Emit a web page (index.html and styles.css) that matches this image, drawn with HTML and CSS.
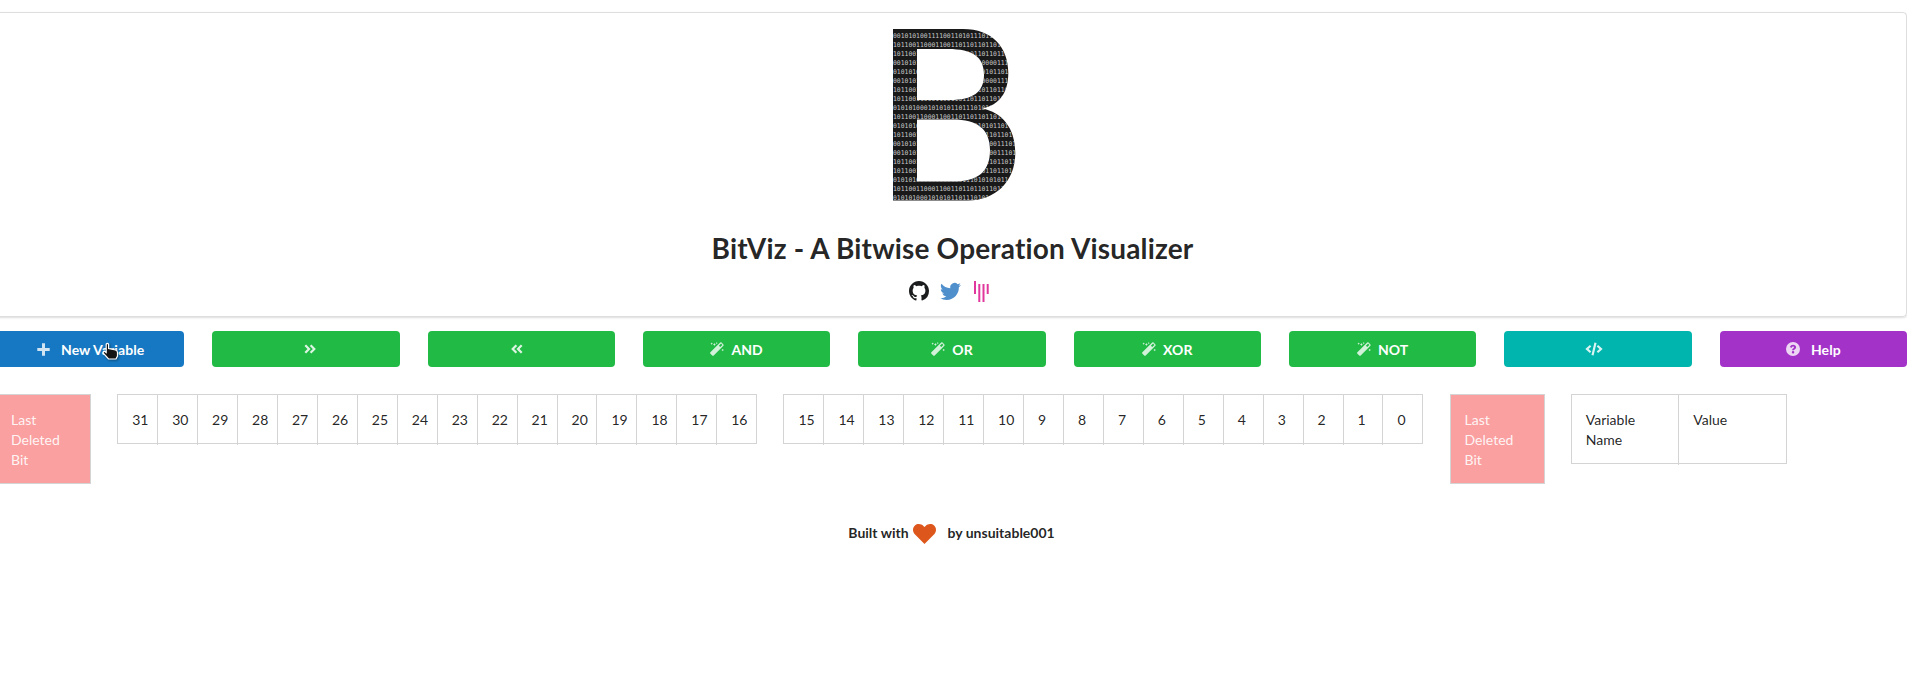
FILE: index.html
```
<!DOCTYPE html>
<html lang="en">
<head>
<meta charset="utf-8">
<title>BitViz - A Bitwise Operation Visualizer</title>
<link rel="stylesheet" href="styles.css">
</head>
<body>
<svg class="defs" width="0" height="0">
  <symbol id="wand" viewBox="0 0 14 14">
    <path fill-rule="evenodd" d="M.4 10.3 10.2.6Q10.9 0 11.6.6L13.4 2.400Q14 3.100 13.400 3.800L3.700 13.600Q3 14.200 2.300 13.600L.4 11.700Q-.2 11 .4 10.300ZM8.900 3.800 10.200 5.100 12.400 2.900 11.100 1.600Z"/>
    <path d="M1.700.4l.4.9.9.4-.9.400-.4.900-.4-.9L.4 1.700l.9-.4ZM4.400 1l.5 1 1 .5-1 .5-.5 1-.5-1-1-.5 1-.5ZM6.700 0l.3.800.8.300-.8.300-.3.800-.3-.8-.8-.3.800-.3ZM12.700 6.700l.4.900.9.400-.9.400-.4.900-.4-.9-.9-.4.900-.4Z"/>
  </symbol>
</svg>
<div class="page">
  <header class="segment">
    <svg class="logo" width="124" height="172" viewBox="0 0 124 172" role="img" aria-label="B">
      <clipPath id="letter"><path clip-rule="evenodd" d="M0 0H70C99 0 115.300 18 115.300 44C115.300 63 107 76 89 79.500C109 83 122.300 99 122.300 124C122.300 153 102 171.500 75 171.500H0ZM24 20V71H57C80 71 91 63 91 46C91 28 80 20 55 20ZM24 90.500V152.500H60C86 152.500 97 142 97 121C97 100 84 90.500 60 90.500Z"/></clipPath>
      <g clip-path="url(#letter)">
        <rect width="124" height="172" fill="#191919"/>
        <g class="bits">
          <text x="0" y="9.3">001010100111100110101110110110110</text>
          <text x="0" y="18.3">101100110001100110110110110110110</text>
          <text x="0" y="27.2">101100110001100110110110110110110</text>
          <text x="0" y="36.2">001010100111100110101110000111010</text>
          <text x="0" y="45.1">010101000101010110111010101101010</text>
          <text x="0" y="54.1">001010100111100110101110000111010</text>
          <text x="0" y="63">101100110001100110110110110110110</text>
          <text x="0" y="72">101100110001100110110110110110110</text>
          <text x="0" y="81">010101000101010110111010101101010</text>
          <text x="0" y="89.9">101100110001100110110110110110110</text>
          <text x="0" y="98.900">010101000101010110111010101101010</text>
          <text x="0" y="107.800">101100110001100110110110110110110</text>
          <text x="0" y="116.800">001010100111100110101110000111010</text>
          <text x="0" y="125.700">001010100111100110101110000111010</text>
          <text x="0" y="134.700">101100110001100110110110110110110</text>
          <text x="0" y="143.700">101100110001100110110110110110110</text>
          <text x="0" y="152.600">010101000101010110111010101011010</text>
          <text x="0" y="161.600">101100110001100110110110110110110</text>
          <text x="0" y="170.500">010101000101010110111010101101010</text>
        </g>
      </g>
    </svg>
    <h1 class="title">BitViz - A Bitwise Operation Visualizer</h1>
    <div class="social">
      <svg width="20" height="20" viewBox="0 0 16 16" fill="#1b1c1d"><path d="M8 0C3.580 0 0 3.580 0 8c0 3.540 2.290 6.530 5.470 7.590.4.070.55-.17.55-.38 0-.19-.01-.82-.01-1.490-2.010.37-2.530-.49-2.690-.94-.09-.23-.48-.94-.82-1.130-.28-.15-.68-.52-.01-.53.63-.01 1.080.58 1.230.82.72 1.210 1.870.87 2.330.66.07-.52.28-.87.51-1.070-1.780-.2-3.640-.89-3.640-3.950 0-.87.31-1.590.82-2.150-.08-.2-.36-1.020.08-2.120 0 0 .67-.21 2.200.82.64-.18 1.320-.27 2-.27s1.360.09 2 .27c1.530-1.040 2.200-.82 2.200-.82.44 1.100.16 1.920.08 2.120.51.56.82 1.270.82 2.150 0 3.070-1.870 3.750-3.650 3.950.29.25.54.73.54 1.480 0 1.070-.01 1.930-.01 2.200 0 .21.15.46.55.38A8.010 8.010 0 0 0 16 8c0-4.420-3.580-8-8-8z"/></svg>
      <svg width="21" height="21" viewBox="0 0 24 24" fill="#4f8fcc"><path d="M23.950 4.570a10 10 0 0 1-2.820.77 4.960 4.960 0 0 0 2.160-2.720c-.95.55-2 .95-3.130 1.180a4.920 4.920 0 0 0-8.380 4.480C7.690 8.090 4.070 6.130 1.640 3.160a4.820 4.820 0 0 0-.67 2.480c0 1.710.87 3.210 2.190 4.100a4.900 4.900 0 0 1-2.230-.62v.06a4.920 4.920 0 0 0 3.950 4.830 5 5 0 0 1-2.210.08 4.940 4.940 0 0 0 4.600 3.420A9.870 9.870 0 0 1 0 19.540a13.990 13.990 0 0 0 7.550 2.210c9.050 0 14-7.500 14-13.980 0-.21 0-.42-.02-.63a9.940 9.940 0 0 0 2.460-2.550z"/></svg>
      <svg class="gitter" width="15" height="21" viewBox="0 0 15 21" fill="#e0389d"><path d="M0 0h2v13H0zM4.300 3h2v18h-2zM8.500 3h2v18h-2zM12.700 3h2v10h-2z"/></svg>
    </div>
  </header>

  <nav class="toolbar">
    <button class="btn blue"><svg class="plus" width="13" height="13" viewBox="0 0 13 13"><path d="M5 .3h3V5h4.700v3H8v4.700H5V8H.3V5H5Z"/></svg>New Variable
      <svg class="pointer" width="19" height="21" viewBox="0 0 19 21"><path d="M4.200 2.200Q5.400.6 6.600 2.200V6.500L13.500 8Q15.500 8.600 15.500 10.500V14L14 17H6.500L1.300 11.200Q.8 9.500 2.400 9.200L4.200 10.500Z"/></svg>
    </button>
    <button class="btn green"><svg class="angle right" width="12" height="10" viewBox="0 0 12 10"><path d="M1.300 1.200 5 5 1.300 8.800M6.600 1.200 10.300 5 6.600 8.800"/></svg></button>
    <button class="btn green"><svg class="angle left" width="12" height="10" viewBox="0 0 12 10"><path d="M5.400 1.200 1.700 5 5.400 8.800M10.700 1.200 7 5 10.700 8.800"/></svg></button>
    <button class="btn green"><svg class="wand" width="14" height="14"><use href="#wand"/></svg>AND</button>
    <button class="btn green"><svg class="wand" width="14" height="14"><use href="#wand"/></svg>OR</button>
    <button class="btn green"><svg class="wand" width="14" height="14"><use href="#wand"/></svg>XOR</button>
    <button class="btn green"><svg class="wand" width="14" height="14"><use href="#wand"/></svg>NOT</button>
    <button class="btn teal"><svg class="code left" width="18" height="14" viewBox="0 0 18 14"><path d="M5.600 3.800 2 7 5.600 10.200M12.400 3.800 16 7 12.400 10.200M10.500.8 7.500 13.200"/></svg></button>
    <button class="btn purple"><svg class="help" width="14" height="14" viewBox="0 0 14 14"><path fill-rule="evenodd" d="M7 0a7 7 0 1 0 0 14A7 7 0 0 0 7 0ZM4 5C4.600 3.500 5.600 2.700 7.100 2.700C8.800 2.700 10.100 3.800 10.100 5.300C10.100 7.200 8 7.300 8 8.300H6.100C6.100 6.400 8.100 6.300 8.100 5.300C8.100 4.100 6.200 4.200 5.400 6ZM7.050 9a1.250 1.250 0 1 1 0 2.500a1.250 1.250 0 0 1 0-2.500Z"/></svg>Help</button>
  </nav>

  <main class="tables">
    <div class="deleted">Last Deleted Bit</div>
    <div class="bitgrid"><span>31</span><span>30</span><span>29</span><span>28</span><span>27</span><span>26</span><span>25</span><span>24</span><span>23</span><span>22</span><span>21</span><span>20</span><span>19</span><span>18</span><span>17</span><span>16</span></div>
    <div class="bitgrid"><span>15</span><span>14</span><span>13</span><span>12</span><span>11</span><span>10</span><span>9</span><span>8</span><span>7</span><span>6</span><span>5</span><span>4</span><span>3</span><span>2</span><span>1</span><span>0</span></div>
    <div class="deleted">Last Deleted Bit</div>
    <div class="variables"><span>Variable Name</span><span>Value</span></div>
  </main>

  <footer class="footer">Built with<svg width="23" height="20" viewBox="0 0 23 20"><path fill="#dd571c" d="M11.500 20 1.800 10.300C-.7 7.600-.5 3.600 1.900 1.500C4.500-.7 8.200-.2 10.400 2L11.500 3.100L12.600 2C14.800-.2 18.500-.7 21.100 1.500C23.500 3.600 23.700 7.600 21.200 10.300Z"/></svg>by unsuitable001</footer>
</div>
</body>
</html>
```
FILE: styles.css
```
* { box-sizing: border-box; }
body {
  margin: 0;
  overflow: hidden;
  background: #fff;
  color: rgba(0, 0, 0, .87);
  font: 14px/20px Lato, "Liberation Sans", sans-serif;
  font-variant-ligatures: none;
}
.defs { display: block; }
.page {
  width: 1911px;
  margin-left: -4px;
  padding-top: 12px;
}
.segment {
  display: flex;
  flex-direction: column;
  align-items: center;
  height: 305px;
  padding-top: 16px;
  border: 1px solid rgba(34, 36, 38, .15);
  border-radius: 4px;
  box-shadow: 0 1px 2px 0 rgba(34, 36, 38, .15);
}
.logo { margin-left: 6px; }
.bits {
  fill: #c8c8c8;
  font: 6.4px "DejaVu Sans Mono", monospace;
}
.title {
  margin: 29px 0 0 2px;
  font-size: 28px;
  line-height: 36px;
  font-weight: 700;
  letter-spacing: .16px;
}
.social {
  display: flex;
  gap: 11px;
  margin: 15px 5px 0 0;
}
.gitter { margin-left: 2px; }
.toolbar {
  display: grid;
  grid-template-columns: repeat(9, 1fr);
  gap: 28px;
  margin: 14px 0 0 1px;
}
.btn {
  position: relative;
  display: flex;
  align-items: center;
  justify-content: center;
  height: 36px;
  padding: 1px 0 0;
  border: 0;
  border-radius: 4px;
  color: #fff;
  font: 700 14px/14px Lato, "Liberation Sans", sans-serif;
  letter-spacing: .08px;
}
.btn svg { margin-top: -1px; fill: currentColor; opacity: .8; }
.blue { background: #1678c2; }
.green { background: #21ba45; }
.teal { background: #00b5ad; }
.purple { background: #a333c8; }
.plus { margin-right: 11px; }
.wand { margin-right: 7px; }
.help { margin-right: 11px; }
.right { margin-left: 8px; }
.left { margin-right: 8px; }
.btn .angle, .btn .code {
  fill: none;
  stroke: currentColor;
  stroke-width: 2.2;
  opacity: .85;
}
.btn .pointer {
  position: absolute;
  left: 105px;
  top: 12px;
  fill: #141414;
  stroke: #fff;
  stroke-width: 1.2;
  opacity: 1;
  filter: drop-shadow(1px 1px 1px rgba(0, 0, 0, .4));
}
.tables {
  display: flex;
  align-items: flex-start;
  gap: 26.2px;
  margin-top: 27px;
}
.deleted {
  width: 95px;
  height: 90px;
  padding: 15px 14px;
  border: 1px solid #d4d4d5;
  background: #faa0a0;
  color: rgba(255, 255, 255, .9);
}
.bitgrid, .variables {
  display: grid;
  border: 1px solid #d4d4d5;
}
.bitgrid {
  grid-template-columns: 39px repeat(15, 1fr);
  width: 640px;
  height: 50px;
}
.variables {
  grid-template-columns: 106.5px 1fr;
  width: 216px;
  height: 70px;
}
.bitgrid span, .variables span { padding: 15px 14px; }
.bitgrid span + span, .variables span + span { border-left: 1px solid #d4d4d5; }
.bitgrid span { padding-right: 0; }
.footer {
  display: flex;
  justify-content: center;
  align-items: center;
  margin: 38px 0 0;
  font-weight: 700;
}
.footer svg { margin: 2px 12px 0 4px; }
```
